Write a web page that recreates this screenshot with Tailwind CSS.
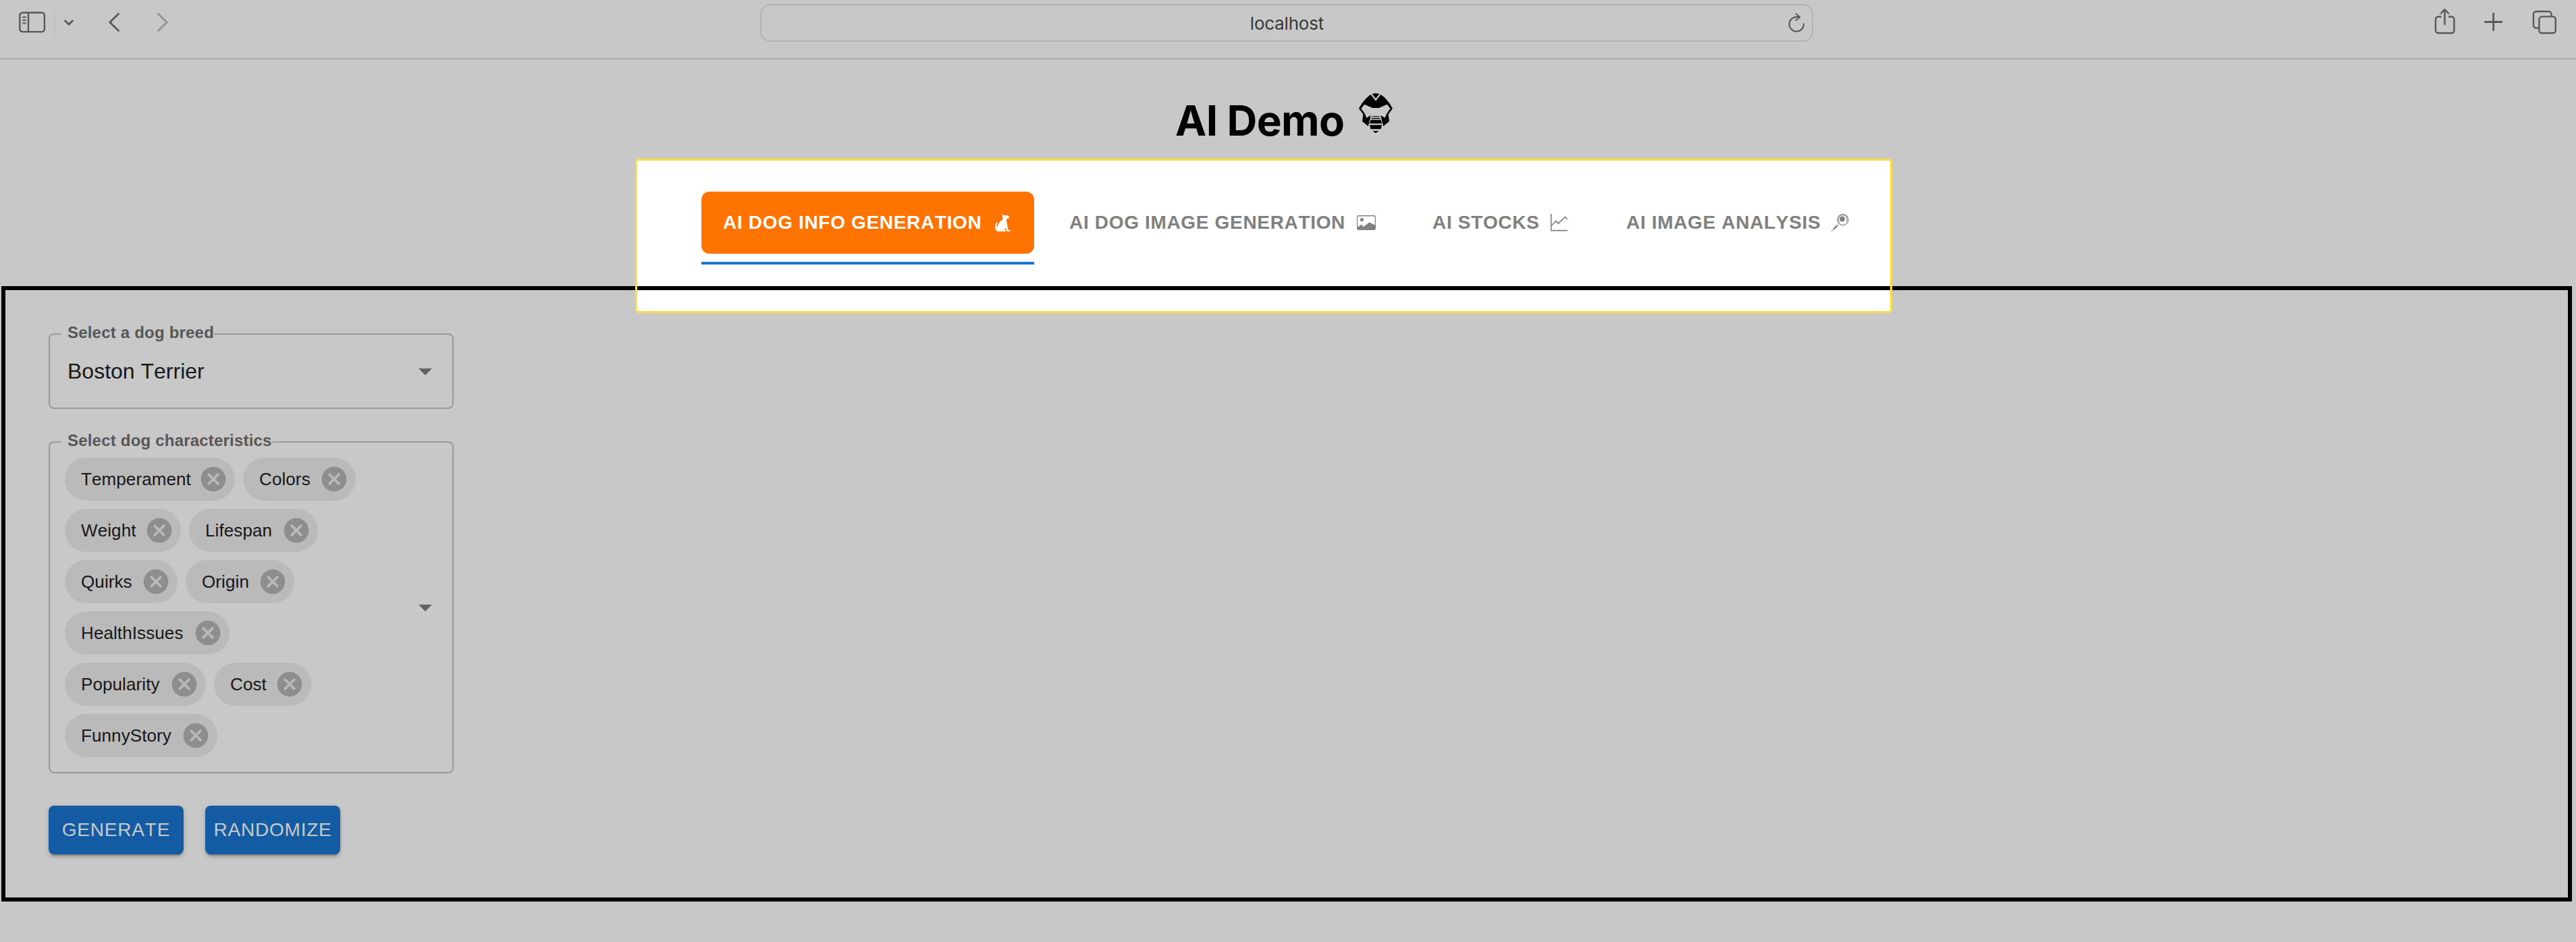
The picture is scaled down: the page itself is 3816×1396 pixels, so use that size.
<!DOCTYPE html>
<html lang="en">
<head>
<meta charset="utf-8">
<title>AI Demo</title>
<script src="https://cdn.jsdelivr.net/npm/@tailwindcss/browser@4"></script>
</head>
<body class="relative h-[1396px] w-[3816px] overflow-hidden bg-white font-['Liberation_Sans',Arial,sans-serif] [font-kerning:none]">

<!-- Browser toolbar -->
<header class="flex h-[88px] items-start justify-between border-b-2 border-[#dadada] text-[#717171]">
  <div class="flex w-[1126px] items-start pl-7 pt-4">
    <svg class="h-9 w-10" viewBox="0 0 40 36" fill="none" stroke="currentColor" stroke-width="2.4" stroke-linecap="round"><rect x="1.3" y="2.7" width="36.6" height="28.4" rx="4"/><path d="M14 3v28"/><path stroke-width="1.8" d="M6 9.5h4M6 14h4M6 18.5h4"/></svg>
    <div class="ml-3 h-9 w-[2px] bg-[#f3f3f3]"></div>
    <svg class="ml-[13px] h-9 w-4" viewBox="0 0 16 36" fill="none" stroke="currentColor" stroke-width="2.8" stroke-linecap="round" stroke-linejoin="round"><path d="M1.6 14.7 7 20.2l5.4-5.5"/></svg>
    <svg class="ml-[49px] h-9 w-5" viewBox="0 0 20 36" fill="none" stroke="currentColor" stroke-width="2.8" stroke-linecap="round" stroke-linejoin="round"><path d="M15.6 4.4 2.7 17l12.9 12.6"/></svg>
    <svg class="ml-[52px] h-9 w-5 text-[#bcbcbc]" viewBox="0 0 20 36" fill="none" stroke="currentColor" stroke-width="2.8" stroke-linecap="round" stroke-linejoin="round"><path d="M2.4 4.4 15.3 17 2.4 29.6"/></svg>
  </div>
  <div class="mt-[6px] flex h-14 w-[1560px] items-center rounded-[15px] border-2 border-[#e4e4e4]">
    <div class="w-[1520px] pl-[37px] pt-[2px] text-center font-[Inter] text-[26px] leading-none tracking-[-0.15px] text-[#484848]">localhost</div>
    <svg class="h-8 w-8" viewBox="0 0 32 32" fill="none" stroke="currentColor" stroke-width="2" stroke-linecap="round" stroke-linejoin="round"><path d="M13.5 7.2A10.7 10.7 0 1 0 24 17.5"/><path d="M13 7h4.5M12.5 2.5l5.6 4.8-5.6 5"/></svg>
  </div>
  <div class="flex w-[1130px] items-start justify-end pr-[27px] pt-3">
    <svg class="h-10 w-8" viewBox="0 0 32 40" fill="none" stroke="currentColor" stroke-width="2.4" stroke-linecap="round" stroke-linejoin="round"><path d="M10.5 12.7H7a4 4 0 0 0-4 4V33a4 4 0 0 0 4 4h19.500a4 4 0 0 0 4-4V16.700a4 4 0 0 0-4-4H23"/><path d="M16.500 24V2.500M10.700 8l5.800-5.800L22.300 8"/></svg>
    <svg class="ml-[43px] h-10 w-7" viewBox="0 0 28 40" fill="none" stroke="currentColor" stroke-width="2.8" stroke-linecap="round"><path d="M1.500 20.500h24.500M13.700 8.200V32.500"/></svg>
    <svg class="ml-[43px] h-10 w-[38px]" viewBox="0 0 38 40" fill="none" stroke="currentColor" stroke-width="2.4" stroke-linejoin="round"><path d="M9.500 29.500H6a4 4 0 0 1-4-4V9a4 4 0 0 1 4-4h18.500a4 4 0 0 1 4 4v3"/><rect x="10.400" y="12.600" width="24.400" height="24.400" rx="4"/></svg>
  </div>
</header>

<!-- Page title -->
<div class="flex h-[196px] items-start pl-[1741px] pt-[50px]">
  <h1 class="w-[272px] whitespace-nowrap pt-[9px] font-[Inter] text-[62px] font-bold leading-[64px] tracking-[-0.6px] text-black">AI Demo</h1>
  <svg class="h-[60px] w-[50px]" viewBox="939 84 150 180" fill="#000">
    <path d="M998 88q16-6 32 0l-16 20z"/>
    <path fill-rule="evenodd" d="M992 91 1014 119 1036 91C1052 99 1072 122 1089 152L1070 178 1074 209 1048 231 1043 215 1036 182 1055 194 1062 176 1079 152 1064 134 1028 150H1000L964 134 949 152 966 176 973 194 992 182 985 215 980 231 954 209 958 178 939 152C956 122 976 99 992 91Z"/>
    <path d="M998 186h32v3h-32zM995 194h38l1 5h-40zM991 203h46l4 16h-54zM987 226h54l-4 18h-46zM1000 252h28l-14 10z"/>
  </svg>
</div>

<!-- Tabs -->
<nav class="flex h-[140px] items-start pl-[1039px] text-[28px] font-bold leading-8 tracking-[0.67px] text-[#808080]">
  <div class="w-[493px] border-b-4 border-[#1976d2] pb-3">
    <div class="flex h-[92px] items-center rounded-xl bg-[#ff7300] pl-8 text-white">
      <span class="w-[403px] whitespace-nowrap">AI DOG INFO GENERATION</span>
      <svg class="h-[26px] w-6" viewBox="0 0 24 26" fill="currentColor"><path d="M10.500 0 13 2.100 17 2 21.500 4 20.500 6.200 17.500 7.200 16.800 10 18 15 19.300 23.500 22.500 24.500V26H17.500L15.500 20 14 23.500 16 24.500V26H5C1.500 26 .3 23 .3 19.500S1 13 3.200 12L4 12.500C2.400 14.500 2 17.500 3 21 4 15.500 7 11 11 8.500L11.500 7Z"/></svg>
    </div>
  </div>
  <div class="flex h-[92px] items-center pl-[52px]">
    <span class="w-[426px] whitespace-nowrap">AI DOG IMAGE GENERATION</span>
    <svg class="h-[22px] w-7" viewBox="0 0 28 22" fill="currentColor"><path fill-rule="evenodd" d="M3 0h22a3 3 0 0 1 3 3v16a3 3 0 0 1-3 3H3a3 3 0 0 1-3-3V3a3 3 0 0 1 3-3Zm0 1.400A1.800 1.800 0 0 0 1.200 3.200V18L6.500 13.800 10 17 18.500 10.500 26.800 14.500V3.200A1.800 1.800 0 0 0 25 1.400Z"/><circle cx="7.500" cy="6.500" r="2.600"/></svg>
  </div>
  <div class="flex h-[92px] items-center pl-[84px]">
    <span class="w-[175px] whitespace-nowrap">AI STOCKS</span>
    <svg class="h-[26px] w-[26px]" viewBox="0 0 26 26" fill="none" stroke="currentColor" stroke-width="1.700"><path d="M.8 0V24.600H25"/><path d="M1.500 17 8 10.700 11.300 14.200 21.500 4.500 24.700 8"/></svg>
  </div>
  <div class="flex h-[92px] items-center pl-[86px]">
    <span class="w-[304px] whitespace-nowrap">AI IMAGE ANALYSIS</span>
    <svg class="h-[26px] w-[26px]" viewBox="0 0 26 26" fill="none" stroke="currentColor"><circle cx="17" cy="8.700" r="8" stroke-width="1.200"/><path stroke-width="1" d="M12 13a6.600 6.600 0 1 1 10-1"/><circle cx="16" cy="7.500" r="3.900" fill="currentColor" stroke="none"/><path stroke-width="2.400" d="M9.300 16.600 2.800 23.200"/><path stroke-width="1.600" d="M1.600 24.200.3 25.500"/></svg>
  </div>
</nav>

<!-- Panel -->
<main class="ml-[2px] flex h-[912px] w-[3808px] flex-col items-start border-[6px] border-black pl-16 pt-16">
  <section class="relative h-[112px] w-[600px] rounded-lg border-2 border-black/23 pl-[26px] pt-[31px]">
    <div class="absolute -top-[17px] left-4 whitespace-nowrap bg-white pl-[10px] text-[24px] font-bold leading-7 tracking-[0.2px] text-[#6f6f6f]">Select a dog breed</div>
    <div class="text-[32px] leading-[46px] text-[#212121]">Boston Terrier</div>
    <svg class="absolute right-[30px] top-[50px] h-[10px] w-5" viewBox="0 0 20 10" fill="#7d7d7d"><path d="M0 0h20L10 10z"/></svg>
  </section>

  <section class="relative mt-12 h-[492px] w-[600px] rounded-lg border-2 border-black/23 pl-[22px] pt-[22px]">
    <div class="absolute -top-[17px] left-4 whitespace-nowrap bg-white pl-[10px] text-[24px] font-bold leading-7 tracking-[0.2px] text-[#6f6f6f]">Select dog characteristics</div>
    <div id="chips" class="flex flex-col gap-3 text-[26px] leading-[30px] tracking-[0.1px] text-[#212121]"></div>
    <svg class="absolute right-[30px] top-[240px] h-[10px] w-5" viewBox="0 0 20 10" fill="#7d7d7d"><path d="M0 0h20L10 10z"/></svg>
  </section>

  <div class="mt-12 flex gap-8 text-[28px] leading-[72px] tracking-[0.8px] text-white">
    <button class="h-[72px] w-[200px] rounded-lg bg-[#1976d2] shadow-[0_6px_2px_-4px_rgba(0,0,0,0.2),0_4px_4px_0_rgba(0,0,0,0.14),0_2px_10px_0_rgba(0,0,0,0.12)]">GENERATE</button>
    <button class="h-[72px] w-[200px] rounded-lg bg-[#1976d2] shadow-[0_6px_2px_-4px_rgba(0,0,0,0.2),0_4px_4px_0_rgba(0,0,0,0.14),0_2px_10px_0_rgba(0,0,0,0.12)]">RANDOMIZE</button>
  </div>
</main>

<!-- Spotlight over the tabs; its spread shadow dims the rest of the page -->
<div class="pointer-events-none absolute left-[941px] top-[235px] h-[229px] w-[1862px] rounded-md border-[3px] border-[#fedc3c] shadow-[0_0_0_4000px_rgba(0,0,0,0.216)]"></div>

<script>
  const rows = [
    [['Temperament', 252], ['Colors', 167]],
    [['Weight', 172], ['Lifespan', 191]],
    [['Quirks', 167], ['Origin', 161]],
    [['HealthIssues', 244]],
    [['Popularity', 209], ['Cost', 144]],
    [['FunnyStory', 226]]
  ];
  document.getElementById('chips').innerHTML = rows.map(r => '<div class="flex gap-3">' + r.map(([t, w]) =>
    `<div class="flex h-16 items-center justify-between rounded-full bg-[#ededed] pl-6 pr-[10px]" style="width:${w}px"><span class="w-0 whitespace-nowrap">${t}</span><svg class="h-11 w-11" viewBox="0 0 24 24" fill="#b5b5b5"><path d="M12 2C6.470 2 2 6.470 2 12s4.470 10 10 10 10-4.470 10-10S17.530 2 12 2zm5 13.590L15.590 17 12 13.410 8.410 17 7 15.590 10.590 12 7 8.410 8.410 7 12 10.590 15.590 7 17 8.410 13.410 12 17 15.590z"/></svg></div>`).join('') + '</div>').join('');
</script>
</body>
</html>
